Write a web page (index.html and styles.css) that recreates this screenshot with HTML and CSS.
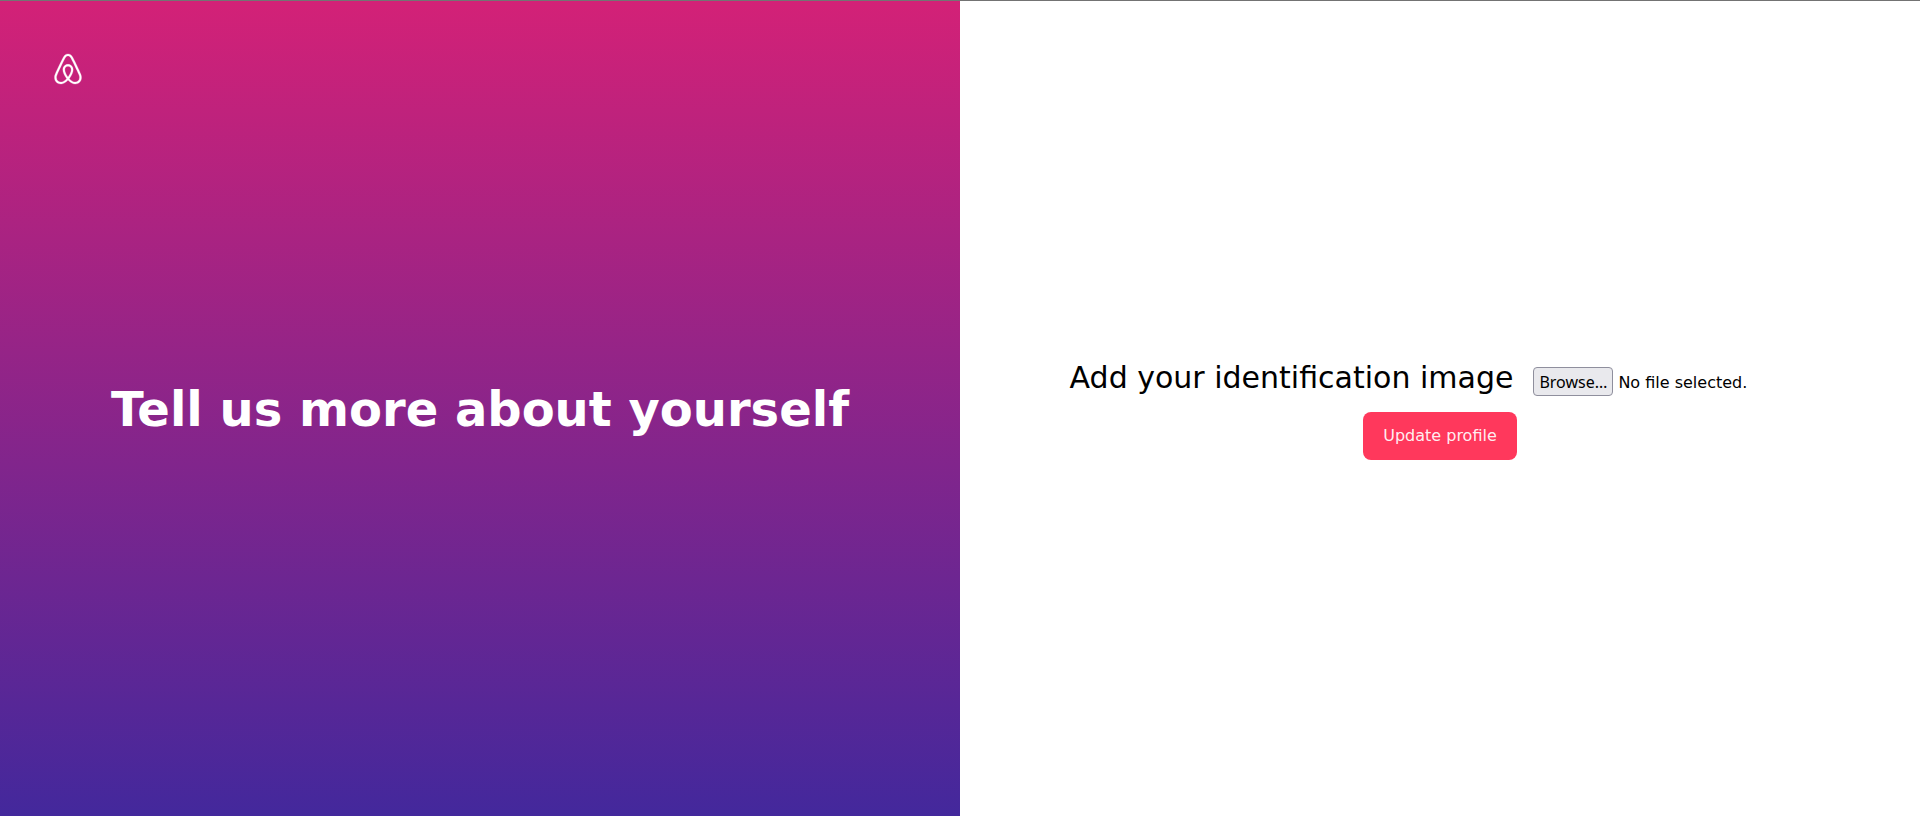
FILE: index.html
```html
<!DOCTYPE html>
<html lang="en">
<head>
<meta charset="utf-8">
<title>Update profile</title>
<link rel="stylesheet" href="styles.css">
</head>
<body>
<main class="page">
  <section class="intro">
    <svg class="logo" viewBox="0 0 32 32" fill="#fff" aria-hidden="true"><path d="M16 1c2.008 0 3.463.963 4.751 3.269l.533 1.025c1.954 3.83 6.114 12.54 7.1 14.836l.145.353c.667 1.591.91 2.472.96 3.396l.01.415.001.228c0 4.062-2.877 6.478-6.357 6.478-2.224 0-4.556-1.258-6.709-3.386l-.257-.26-.172-.179h-.011l-.176.185c-2.044 2.1-4.267 3.42-6.414 3.615l-.28.019-.267.006C5.377 31 2.5 28.584 2.5 24.522l.005-.469c.026-.928.23-1.768.83-3.244l.216-.524c.966-2.298 6.083-12.989 7.707-16.034C12.537 1.963 13.992 1 16 1zm0 2c-1.239 0-2.053.539-2.987 2.21l-.523 1.008c-1.926 3.776-6.06 12.43-7.031 14.692l-.345.836c-.427 1.071-.573 1.655-.605 2.24l-.009.33v.206C4.5 27.395 6.411 29 8.857 29c1.773 0 3.87-1.236 5.831-3.354-2.295-2.938-3.855-6.45-3.855-8.91 0-2.913 1.933-5.386 5.178-5.42 3.223.034 5.156 2.507 5.156 5.42 0 2.456-1.555 5.96-3.855 8.907C19.277 27.766 21.37 29 23.142 29c2.447 0 4.358-1.605 4.358-4.478l-.004-.411c-.019-.672-.17-1.296-.714-2.62l-.248-.6c-1.065-2.478-5.993-12.768-7.538-15.664C18.053 3.539 17.24 3 16 3zm.01 10.316c-2.01.021-3.177 1.514-3.177 3.42 0 1.797 1.18 4.58 2.955 7.044l.212.287.174-.234c1.73-2.385 2.898-5.066 2.989-6.875l.006-.221c0-1.906-1.167-3.4-3.159-3.421z"/></svg>
    <h1 class="title">Tell us more about yourself</h1>
  </section>
  <section class="content">
    <form class="form">
      <div class="field">
        <label class="label">Add your identification image</label>
        <div class="file"><button class="browse" type="button">Browse…</button><span>No file selected.</span></div>
      </div>
      <button class="submit" type="button">Update profile</button>
    </form>
  </section>
</main>
</body>
</html>
```
FILE: styles.css
```css
* { box-sizing: border-box; }
body { margin: 0; font: 16px "DejaVu Sans", sans-serif; color: #000; }
.page { display: grid; grid-template-columns: 1fr 1fr; height: 816px; border-top: 1px solid #737373; }
.intro { display: grid; grid-template-rows: 136px 1fr 136px; justify-items: center; align-items: center; background: linear-gradient(#d32177, #43289c); }
.logo { width: 32px; height: 32px; justify-self: start; margin-left: 52px; stroke: #fff; stroke-width: .25; }
.title { margin: 0; color: #fff; font-size: 48px; line-height: 60px; font-weight: 700; white-space: nowrap; }
.content { display: flex; align-items: center; justify-content: center; }
.form { display: flex; flex-direction: column; align-items: center; padding-top: 2px; }
.field { display: flex; align-items: baseline; gap: 20px; margin-bottom: 16px; white-space: nowrap; }
.label { font-size: 30px; line-height: 36px; }
.file { display: flex; align-items: baseline; gap: 5px; width: 277px; }
.browse { width: 80px; height: 29px; padding: 1px 0 0; font: 16px/22px "Noto Sans", sans-serif; color: #000; background: #e9e9ed; border: 1px solid #8f8f9d; border-radius: 4px; }
.submit { width: 154px; height: 48px; padding: 0; font: inherit; color: rgba(255, 255, 255, .93); background: #ff385c; border: 0; border-radius: 8px; }
```
